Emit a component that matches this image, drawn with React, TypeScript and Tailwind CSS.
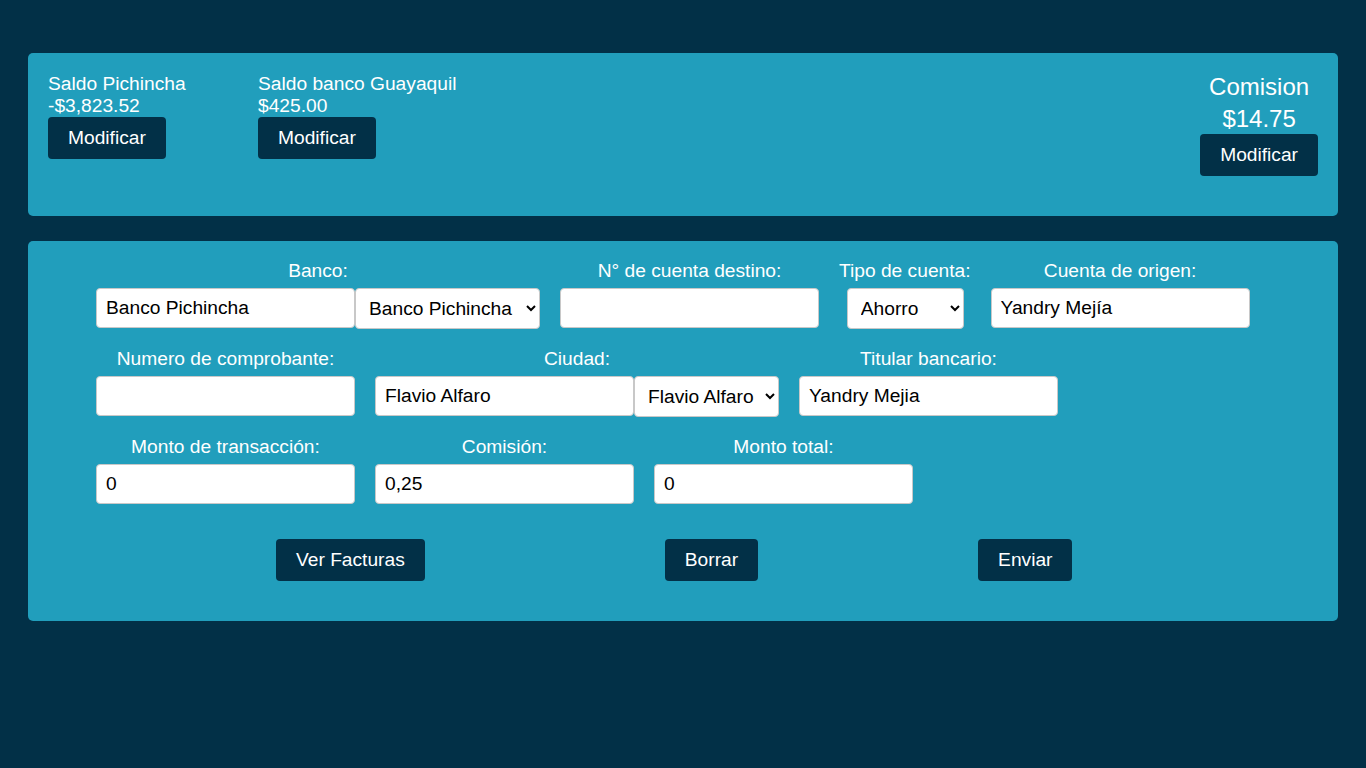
import React from "react";

const inputCls =
  "h-[40px] w-[259px] rounded-[4px] border border-[#c8c8c8] bg-white px-[9px] text-[19.2px] text-black outline-none";
const selectCls =
  "h-[41px] rounded-[4px] border border-[#c8c8c8] bg-white pl-[9px] text-[19.2px] text-black outline-none";
const btnCls =
  "rounded-[4px] bg-[#023047] px-5 py-[10px] text-[19.2px] leading-[22px] text-white";

function Field({ label, children }: { label: string; children: React.ReactNode }) {
  return (
    <div className="flex flex-col items-center">
      <label className="mb-[6px] leading-[22px] text-white">{label}</label>
      <div className="flex items-start">{children}</div>
    </div>
  );
}

export default function App() {
  return (
    <div
      className="min-h-screen bg-[#023047] px-[28px] pt-[53px] text-[19.2px]"
      style={{ fontFamily: '"Liberation Sans", Arial, sans-serif' }}
    >
      {/* Saldos */}
      <div className="flex items-start rounded-[5px] bg-[#219ebc] px-5 pt-5 pb-10 text-white">
        <div className="w-[210px] leading-[22px]">
          <p>Saldo Pichincha</p>
          <p>-$3,823.52</p>
          <button className={btnCls}>Modificar</button>
        </div>
        <div className="leading-[22px]">
          <p>Saldo banco Guayaquil</p>
          <p>$425.00</p>
          <button className={btnCls}>Modificar</button>
        </div>
        <div className="ml-auto -mt-[2px] flex flex-col items-center">
          <p className="text-[24px] leading-[32px]">Comision</p>
          <p className="text-[24px] leading-[32px]">$14.75</p>
          <button className={btnCls + " -mt-px"}>Modificar</button>
        </div>
      </div>

      {/* Formulario */}
      <div className="mt-[25px] rounded-[5px] bg-[#219ebc] pt-[19px] pb-10 pl-[68px]">
        <div className="flex flex-col gap-[19px]">
          <div className="flex gap-5">
            <Field label="Banco:">
              <input className={inputCls} defaultValue="Banco Pichincha" />
              <select className={selectCls + " w-[185px]"} defaultValue="Banco Pichincha">
                <option>Banco Pichincha</option>
                <option>Banco Guayaquil</option>
              </select>
            </Field>
            <Field label="N° de cuenta destino:">
              <input className={inputCls} />
            </Field>
            <Field label="Tipo de cuenta:">
              <select className={selectCls + " ml-px w-[117px]"} defaultValue="Ahorro">
                <option>Ahorro</option>
                <option>Corriente</option>
              </select>
            </Field>
            <Field label="Cuenta de origen:">
              <input className={inputCls} defaultValue="Yandry Mejía" />
            </Field>
          </div>

          <div className="flex gap-5">
            <Field label="Numero de comprobante:">
              <input className={inputCls} />
            </Field>
            <Field label="Ciudad:">
              <input className={inputCls} defaultValue="Flavio Alfaro" />
              <select className={selectCls + " w-[145px]"} defaultValue="Flavio Alfaro">
                <option>Flavio Alfaro</option>
                <option>Portoviejo</option>
              </select>
            </Field>
            <Field label="Titular bancario:">
              <input className={inputCls} defaultValue="Yandry Mejia" />
            </Field>
          </div>

          <div className="flex gap-5">
            <Field label="Monto de transacción:">
              <input className={inputCls} defaultValue="0" />
            </Field>
            <Field label="Comisión:">
              <input className={inputCls} defaultValue="0,25" />
            </Field>
            <Field label="Monto total:">
              <input className={inputCls} defaultValue="0" />
            </Field>
          </div>
        </div>

        <div className="mt-[35px] flex">
          <button className={btnCls + " ml-[180px]"}>Ver Facturas</button>
          <button className={btnCls + " ml-[240px]"}>Borrar</button>
          <button className={btnCls + " ml-[220px]"}>Enviar</button>
        </div>
      </div>
    </div>
  );
}
